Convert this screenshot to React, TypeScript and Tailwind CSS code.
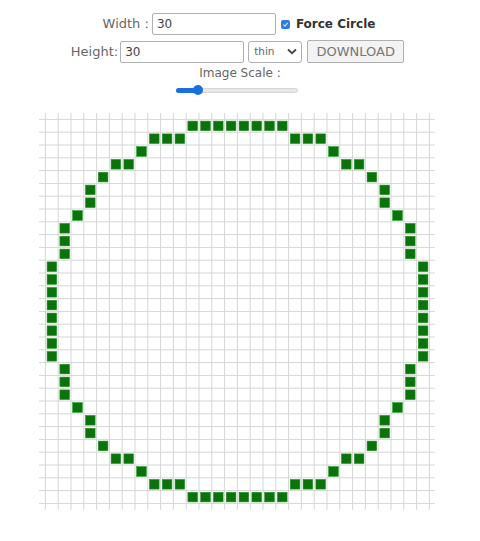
import React from "react";

const P = 12.8;
const OFF = 6.4;
const N = 30;

function buildCells(): [number, number][] {
  const half: [number, number[]][] = [
    [0, [11, 12, 13, 14, 15, 16, 17, 18]],
    [1, [8, 9, 10, 19, 20, 21]],
    [2, [7, 22]],
    [3, [5, 6, 23, 24]],
    [4, [4, 25]],
    [5, [3, 26]],
    [6, [3, 26]],
    [7, [2, 27]],
    [8, [1, 28]],
    [9, [1, 28]],
    [10, [1, 28]],
    [11, [0, 29]],
    [12, [0, 29]],
    [13, [0, 29]],
    [14, [0, 29]],
  ];
  const out: [number, number][] = [];
  for (const [r, cols] of half) {
    for (const c of cols) {
      out.push([r, c]);
      out.push([N - 1 - r, c]);
    }
  }
  return out;
}

const cells = buildCells();

function PixelGrid() {
  const size = N * P + 2 * OFF;
  const lines: React.ReactNode[] = [];
  for (let k = 0; k <= N; k++) {
    const p = OFF + k * P;
    lines.push(
      <line key={`h${k}`} x1={0} x2={size} y1={p} y2={p} stroke="#d6d6d6" strokeWidth={1} />
    );
    lines.push(
      <line key={`v${k}`} y1={0} y2={size} x1={p} x2={p} stroke="#d6d6d6" strokeWidth={1} />
    );
  }
  return (
    <svg width={size} height={size} viewBox={`0 0 ${size} ${size}`} className="block mr-[6px]">
      {lines}
      {cells.map(([r, c]) => (
        <rect
          key={`${r}-${c}`}
          x={OFF + c * P + 1.7}
          y={OFF + r * P + 1.7}
          width={9.6}
          height={9.6}
          fill="#0b730b"
          stroke="#219321"
          strokeWidth={0.6}
        />
      ))}
    </svg>
  );
}

export default function App() {
  return (
    <div
      className="w-[480px] h-[541px] bg-white flex flex-col items-center overflow-hidden"
      style={{ fontFamily: '"DejaVu Sans", sans-serif' }}
    >
      {/* Row 1 */}
      <div className="flex items-center mt-[13px] h-[22px] mr-[2px]">
        <span className="text-[13px] text-[#666] mr-[3px]">Width :</span>
        <div className="w-[124px] h-[22px] border border-[#b0b0b0] rounded-[2px] flex items-center pl-[4px] text-[12px] text-[#444]">
          30
        </div>
        <span className="ml-[5px] w-[9px] h-[9px] rounded-[2px] bg-[#2f7de1] flex items-center justify-center">
          <svg width="7" height="7" viewBox="0 0 10 10">
            <path d="M2 5.2 L4.2 7.4 L8.2 2.8" stroke="#cfe3ff" strokeWidth="1.6" fill="none" />
          </svg>
        </span>
        <span className="ml-[6px] text-[12px] font-bold text-[#333]">Force Circle</span>
      </div>
      {/* Row 2 */}
      <div className="flex items-center mt-[5px] h-[23px] mr-[5px]">
        <span className="text-[13px] text-[#666] mr-[2px]">Height:</span>
        <div className="w-[124px] h-[22px] border border-[#b0b0b0] rounded-[2px] flex items-center pl-[4px] text-[12px] text-[#444]">
          30
        </div>
        <div className="ml-[4px] w-[54px] h-[22px] border border-[#b0b0b0] rounded-[3px] flex items-center pl-[5px] pr-[4px] justify-between text-[10.5px] text-[#666]">
          <span>thin</span>
          <svg width="10" height="7" viewBox="0 0 10 7">
            <path d="M1 1.5 L5 5.2 L9 1.5" stroke="#444" strokeWidth="1.8" fill="none" />
          </svg>
        </div>
        <div className="ml-[5px] w-[97px] h-[23px] border border-[#b0b0b0] rounded-[2px] bg-[#f3f3f3] flex items-center justify-center text-[13px] text-[#777]">
          DOWNLOAD
        </div>
      </div>
      {/* Row 3 */}
      <div className="mt-[3px] h-[14px] leading-[14px] text-[12px] text-[#666]">Image Scale :</div>
      {/* Slider */}
      <div className="mt-[5px] w-[122px] h-[10px] relative flex items-center mr-[6px]">
        <div className="w-full h-[5px] rounded-full bg-[#e8e8e8] border border-[#d6d6d6]" />
        <div className="absolute left-0 top-[2.5px] w-[24px] h-[5px] rounded-full bg-[#1a6fe0]" />
        <div className="absolute left-[17px] top-0 w-[10px] h-[10px] rounded-full bg-[#1a6fe0]" />
      </div>
      {/* Grid */}
      <div className="mt-[18px]">
        <PixelGrid />
      </div>
    </div>
  );
}
